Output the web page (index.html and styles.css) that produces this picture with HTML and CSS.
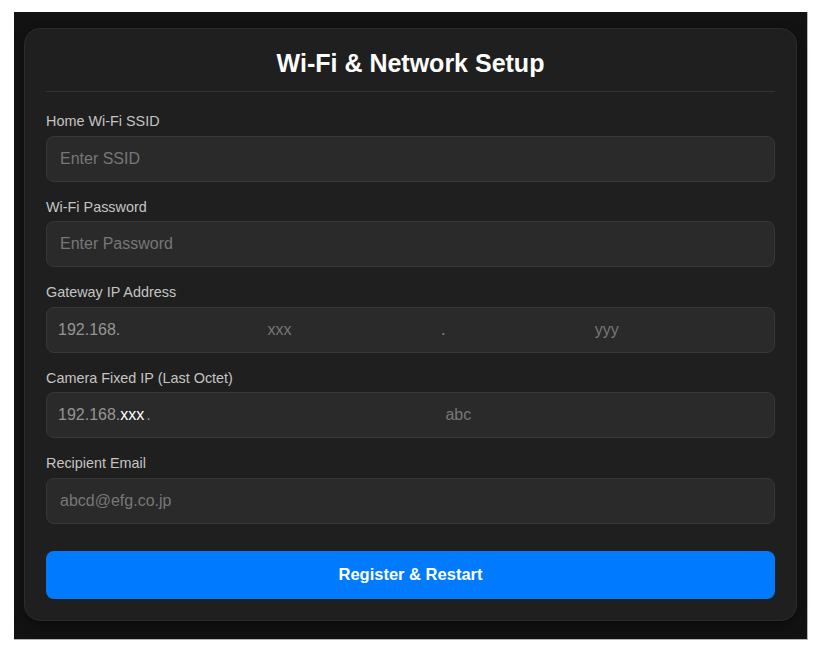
FILE: index.html
```html
<!DOCTYPE html>
<html lang="en">
<head>
    <meta charset="UTF-8">
    <meta name="viewport" content="width=device-width, initial-scale=1.0">
    <title>Wi-Fi &amp; Network Setup</title>
    <link rel="stylesheet" href="styles.css">
</head>
<body>
    <div class="page">
        <form class="card" onsubmit="return false;">
            <h2>Wi-Fi &amp; Network Setup</h2>

            <div class="field">
                <label for="ssid">Home Wi-Fi SSID</label>
                <input type="text" id="ssid" class="text-input" placeholder="Enter SSID">
            </div>

            <div class="field">
                <label for="pass">Wi-Fi Password</label>
                <input type="password" id="pass" class="text-input" placeholder="Enter Password">
            </div>

            <div class="field">
                <label for="gw1">Gateway IP Address</label>
                <div class="ip-box">
                    <span class="prefix">192.168.</span>
                    <input type="text" id="gw1" placeholder="xxx" maxlength="3">
                    <span class="dot">.</span>
                    <input type="text" id="gw2" placeholder="yyy" maxlength="3">
                </div>
            </div>

            <div class="field">
                <label for="cam">Camera Fixed IP (Last Octet)</label>
                <div class="ip-box">
                    <span class="prefix">192.168.<span class="octet">xxx</span>.</span>
                    <input type="text" id="cam" placeholder="abc" maxlength="3">
                </div>
            </div>

            <div class="field">
                <label for="mail">Recipient Email</label>
                <input type="email" id="mail" class="text-input" placeholder="abcd@efg.co.jp">
            </div>

            <button type="submit">Register &amp; Restart</button>
        </form>
    </div>
</body>
</html>
```

FILE: styles.css
```css
html, body {
    margin: 0;
    background: #fff;
}
body {
    font-family: "Liberation Sans", Arial, sans-serif;
    padding: 12px 11px 10px 14px;
}
.page {
    background-color: #121212;
    padding: 16px 10px 18px 10px;
    border-right: 1px solid #b5b5b5;
    border-bottom: 1px solid #b5b5b5;
}
.card {
    background: #1f1f1f;
    border: 1px solid #2b2b2b;
    border-radius: 16px;
    padding: 20px 21px 21px;
    box-shadow: 0 4px 12px rgba(0, 0, 0, 0.4);
}
.card h2 {
    margin: 0 0 21px;
    padding-bottom: 14px;
    border-bottom: 1px solid #333;
    color: #fff;
    text-align: center;
    font-size: 25px;
    line-height: 28px;
    font-weight: bold;
}
.field {
    margin-bottom: 17px;
}
.field label {
    display: block;
    color: #c4c4c4;
    font-size: 14.4px;
    line-height: 16.5px;
    margin-bottom: 6px;
}
.text-input, .ip-box {
    box-sizing: border-box;
    width: 100%;
    height: 46px;
    background: #2a2a2a;
    border: 1px solid #383838;
    border-radius: 8px;
    color: #ddd;
    font-family: inherit;
    font-size: 16px;
}
.text-input {
    display: block;
    padding: 0 13px;
    outline: none;
}
input::placeholder {
    color: #777;
}
.ip-box {
    display: flex;
    align-items: center;
    padding: 0 8px 0 11px;
}
.ip-box .prefix {
    color: #959595;
    white-space: nowrap;
}
.ip-box .octet {
    color: #fff;
    margin-right: 2px;
}
.ip-box .dot {
    color: #959595;
    margin: 0 2px;
}
.ip-box input {
    flex: 1;
    min-width: 0;
    height: 100%;
    background: transparent;
    border: none;
    outline: none;
    color: #ddd;
    text-align: center;
    font-family: inherit;
    font-size: 16px;
    padding: 0;
}
button {
    display: block;
    width: 100%;
    height: 48px;
    margin-top: 27px;
    border: none;
    border-radius: 8px;
    background-color: #007bff;
    color: #fff;
    font-family: "Liberation Sans", Arial, sans-serif;
    font-size: 16.5px;
    font-weight: bold;
    cursor: pointer;
}
button:hover {
    background-color: #0069d9;
}
```
